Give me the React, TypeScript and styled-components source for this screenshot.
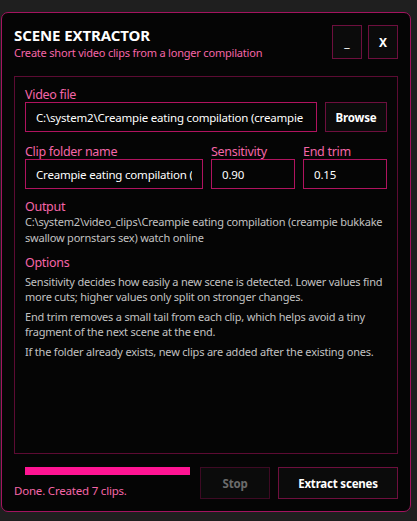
import React from 'react'
import styled, { createGlobalStyle } from 'styled-components'

const GlobalStyle = createGlobalStyle`
  html, body {
    margin: 0;
    padding: 0;
    background: #1f1f1f;
    font-family: "Noto Sans", "Open Sans", sans-serif;
    letter-spacing: -0.2px;
  }
  * { box-sizing: border-box; }
`

const pink = '#f565a8'

const Window = styled.div`
  width: 410px;
  height: 500px;
  margin: 12px 0 0 1px;
  padding: 12px;
  background: #050505;
  border: 1px solid #a3145f;
  border-radius: 7px;
  display: flex;
  flex-direction: column;
`

const Header = styled.div`
  display: flex;
  align-items: flex-start;
  justify-content: space-between;
`

const TitleBlock = styled.div`
  display: flex;
  flex-direction: column;
  padding-top: 1px;
`

const Title = styled.h1`
  margin: 0;
  font-size: 15px;
  line-height: 19px;
  font-weight: 700;
  letter-spacing: -0.1px;
  color: #ffffff;
`

const Subtitle = styled.div`
  font-size: 11px;
  line-height: 16px;
  color: ${pink};
`

const WindowButtons = styled.div`
  display: flex;
  gap: 6px;
`

const WinButton = styled.button<{ $light?: boolean }>`
  width: 30px;
  height: 34px;
  padding: 0;
  background: #0b0b0b;
  border: 1px solid #6e0f3e;
  color: #ffffff;
  font-family: inherit;
  font-size: 12px;
  font-weight: ${p => (p.$light ? 400 : 700)};
`

const Panel = styled.div`
  flex: 1;
  margin-top: 15px;
  padding: 10px 10px 10px;
  border: 1px solid #5c0b33;
  display: flex;
  flex-direction: column;
`

const Label = styled.div<{ $top?: number }>`
  margin-top: ${p => p.$top ?? 0}px;
  font-size: 12.5px;
  line-height: 15px;
  letter-spacing: -0.3px;
  color: ${pink};
`

const Row = styled.div`
  display: flex;
  gap: 8px;
`

const FieldGrid = styled.div`
  display: grid;
  grid-template-columns: 178px 84px 84px;
  column-gap: 8px;
  margin-top: 12px;
`

const Field = styled.div`
  display: flex;
  flex-direction: column;
`

const TextInput = styled.input`
  width: 100%;
  min-width: 0;
  height: 30px;
  padding: 0 10px;
  background: #050505;
  border: 1px solid #b0135f;
  outline: none;
  color: #ffffff;
  font-family: inherit;
  font-size: 11.5px;
  letter-spacing: -0.2px;
`

const Button = styled.button<{ $width: number }>`
  flex: none;
  width: ${p => p.$width}px;
  height: ${p => (p.$width > 64 ? 32 : 30)}px;
  padding: 0;
  background: #0b0b0b;
  border: 1px solid ${p => (p.disabled ? '#3e0a24' : '#6e0f3e')};
  color: ${p => (p.disabled ? '#6b6b6b' : '#ffffff')};
  font-family: inherit;
  font-size: 11.5px;
  font-weight: 700;
  letter-spacing: -0.2px;
`

const InfoText = styled.div`
  font-size: 11px;
  line-height: 16px;
  color: #c2c2c2;
`

const Paragraph = styled.p<{ $top: number }>`
  margin: ${p => p.$top}px 0 0;
  font-size: 11px;
  line-height: 15px;
  color: #c2c2c2;
`

const Footer = styled.div`
  display: flex;
  gap: 8px;
  margin-top: 13px;
`

const StatusColumn = styled.div`
  width: 178px;
  display: flex;
  flex-direction: column;
`

const Progress = styled.div`
  width: 165px;
  height: 8px;
  margin-left: 11px;
  background: #1a1a1a;
`

const ProgressFill = styled.div`
  height: 100%;
  background: #ff1493;
`

const Status = styled.div`
  margin-top: 8px;
  font-size: 11.5px;
  line-height: 16px;
  color: ${pink};
`

const videoPath = 'C:\\system2\\Creampie eating compilation (creampie bukkake swallow pornstars sex) watch online.mp4'
const folderName = 'Creampie eating compilation (creampie bukkake swallow pornstars sex) watch online'

const App: React.FC = () => {
  const progress = 100
  return (
    <>
      <GlobalStyle />
      <Window>
        <Header>
          <TitleBlock>
            <Title>SCENE EXTRACTOR</Title>
            <Subtitle>Create short video clips from a longer compilation</Subtitle>
          </TitleBlock>
          <WindowButtons>
            <WinButton $light>_</WinButton>
            <WinButton>X</WinButton>
          </WindowButtons>
        </Header>

        <Panel>
          <Label>Video file</Label>
          <Row>
            <TextInput readOnly defaultValue={videoPath} />
            <Button $width={62}>Browse</Button>
          </Row>

          <FieldGrid>
            <Field>
              <Label>Clip folder name</Label>
              <TextInput readOnly defaultValue={folderName} />
            </Field>
            <Field>
              <Label>Sensitivity</Label>
              <TextInput readOnly defaultValue="0.90" />
            </Field>
            <Field>
              <Label>End trim</Label>
              <TextInput readOnly defaultValue="0.15" />
            </Field>
          </FieldGrid>

          <Label $top={10}>Output</Label>
          <InfoText>C:\system2\video_clips\{folderName}</InfoText>

          <Label $top={9}>Options</Label>
          <Paragraph $top={4}>
            Sensitivity decides how easily a new scene is detected. Lower values find more cuts; higher values only split on stronger changes.
          </Paragraph>
          <Paragraph $top={5}>
            End trim removes a small tail from each clip, which helps avoid a tiny fragment of the next scene at the end.
          </Paragraph>
          <Paragraph $top={5}>
            If the folder already exists, new clips are added after the existing ones.
          </Paragraph>
        </Panel>

        <Footer>
          <StatusColumn>
            <Progress>
              <ProgressFill style={{ width: `${progress}%` }} />
            </Progress>
            <Status>Done. Created 7 clips.</Status>
          </StatusColumn>
          <Button $width={70} disabled>Stop</Button>
          <Button $width={120}>Extract scenes</Button>
        </Footer>
      </Window>
    </>
  )
}

export default App
